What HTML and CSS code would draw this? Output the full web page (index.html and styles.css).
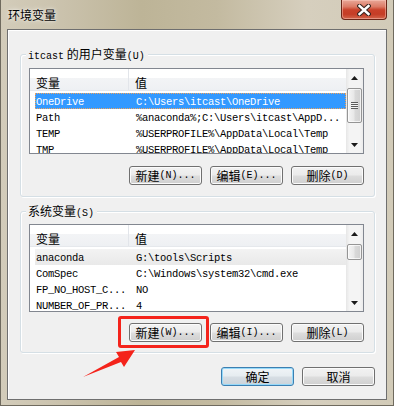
FILE: index.html
```html
<!DOCTYPE html>
<html lang="zh-CN">
<head>
<meta charset="utf-8">
<title>环境变量</title>
<link rel="stylesheet" href="styles.css">
</head>
<body>
<div class="window">
  <div class="titlebar">
    <span class="title">环境变量</span>
    <button class="close" aria-label="关闭">
      <svg width="14" height="12" viewBox="0 0 14 12"><path d="M2.5 2 L11.5 10 M11.5 2 L2.5 10" stroke="#3a2620" stroke-width="4.6" stroke-linecap="square" fill="none"/><path d="M2.5 2 L11.5 10 M11.5 2 L2.5 10" stroke="#ffffff" stroke-width="2.4" stroke-linecap="square" fill="none"/></svg>
    </button>
  </div>
  <div class="client">
    <section class="group group-user">
      <span class="legend"><span class="mono">itcast</span> 的用户变量<span class="mono">(U)</span></span>
      <div class="list list-user">
        <div class="list-main">
          <div class="lv-header"><div class="hcell hname">变量</div><div class="hcell hvalue">值</div></div>
          <div class="lv-body">
            <div class="lv-row selected"><span class="cname">OneDrive</span><span class="cvalue">C:\Users\itcast\OneDrive</span></div>
            <div class="lv-row"><span class="cname">Path</span><span class="cvalue">%anaconda%;C:\Users\itcast\AppD...</span></div>
            <div class="lv-row"><span class="cname">TEMP</span><span class="cvalue">%USERPROFILE%\AppData\Local\Temp</span></div>
            <div class="lv-row"><span class="cname">TMP</span><span class="cvalue">%USERPROFILE%\AppData\Local\Temp</span></div>
          </div>
        </div>
        <div class="scrollbar">
          <div class="sb-btn"><svg width="7" height="4" viewBox="0 0 7 4"><path d="M3.5 0 L7 4 L0 4Z" fill="#1a1a1a"/></svg></div>
          <div class="sb-track"><div class="thumb thumb-user"><div class="grip"></div></div></div>
          <div class="sb-btn"><svg width="7" height="4" viewBox="0 0 7 4"><path d="M0 0 L7 0 L3.5 4Z" fill="#1a1a1a"/></svg></div>
        </div>
      </div>
      <div class="btn-row">
        <button class="btn">新建<span class="mono">(N)...</span></button>
        <button class="btn">编辑<span class="mono">(E)...</span></button>
        <button class="btn">删除<span class="mono">(D)</span></button>
      </div>
    </section>

    <section class="group group-sys">
      <span class="legend">系统变量<span class="mono">(S)</span></span>
      <div class="list list-sys">
        <div class="list-main">
          <div class="lv-header"><div class="hcell hname">变量</div><div class="hcell hvalue">值</div></div>
          <div class="lv-body">
            <div class="lv-row hot"><span class="cname">anaconda</span><span class="cvalue">G:\tools\Scripts</span></div>
            <div class="lv-row"><span class="cname">ComSpec</span><span class="cvalue">C:\Windows\system32\cmd.exe</span></div>
            <div class="lv-row"><span class="cname">FP_NO_HOST_C...</span><span class="cvalue">NO</span></div>
            <div class="lv-row"><span class="cname">NUMBER_OF_PR...</span><span class="cvalue">4</span></div>
          </div>
        </div>
        <div class="scrollbar">
          <div class="sb-btn"><svg width="7" height="4" viewBox="0 0 7 4"><path d="M3.5 0 L7 4 L0 4Z" fill="#1a1a1a"/></svg></div>
          <div class="sb-track"><div class="thumb thumb-sys"></div></div>
          <div class="sb-btn"><svg width="7" height="4" viewBox="0 0 7 4"><path d="M0 0 L7 0 L3.5 4Z" fill="#1a1a1a"/></svg></div>
        </div>
      </div>
      <div class="btn-row">
        <button class="btn">新建<span class="mono">(W)...</span></button>
        <button class="btn">编辑<span class="mono">(I)...</span></button>
        <button class="btn">删除<span class="mono">(L)</span></button>
      </div>
    </section>

    <div class="dialog-buttons">
      <button class="btn default">确定</button>
      <button class="btn">取消</button>
    </div>

    <div class="callout"></div>
    <svg class="pointer" width="60" height="40" viewBox="0 0 60 40"><polygon points="5,33 41,13 38,8 57,6 46,23 43,18" fill="#f4231b"/></svg>
  </div>
</div>
</body>
</html>
```

FILE: styles.css
```css
* { box-sizing: border-box; }

html, body {
  margin: 0;
  padding: 0;
}

body {
  width: 394px;
  height: 406px;
  overflow: hidden;
  font-family: "Noto Sans CJK SC", "Noto Sans", sans-serif;
  font-size: 12px;
  color: #000;
}

.mono {
  font-family: "Liberation Mono", "DejaVu Sans Mono", monospace;
  font-size: 10px;
}

.window {
  width: 394px;
  height: 406px;
  display: flex;
  flex-direction: column;
  padding: 0 6px 5px 6px;
  border: 1px solid #6f6a5e;
  border-top: none;
  background:
    linear-gradient(90deg, #d3ccba 0%, #cbc3ae 14%, #bdb497 36%, #c3baa0 55%, #d6cfbe 78%, #d2cbb8 100%);
}

.titlebar {
  height: 29px;
  flex: none;
  display: flex;
  justify-content: space-between;
  align-items: flex-start;
}

.title {
  margin-left: 1px;
  padding-top: 7px;
  line-height: 16px;
  font-size: 12px;
  color: #000;
  text-shadow: 0 0 5px rgba(255, 255, 255, 0.85), 0 0 2px rgba(255, 255, 255, 0.7);
}

.close {
  width: 46px;
  height: 20px;
  margin: 0;
  padding: 0;
  border: 1px solid #6a2618;
  border-top: none;
  border-radius: 0 0 4px 4px;
  background: linear-gradient(#e9a898 0%, #dc7b66 35%, #c9412a 52%, #c53d26 75%, #d2664c 100%);
  box-shadow: inset 0 0 0 1px rgba(255, 210, 200, 0.45);
  display: flex;
  align-items: center;
  justify-content: center;
}

.client {
  flex: 1;
  position: relative;
  background: #f0f0f0;
  border: 1px solid #6f6f6f;
  box-shadow: inset 1px 1px 0 #ffffff;
  padding: 0 11px 0 12px;
  display: flex;
  flex-direction: column;
}

.group {
  position: relative;
  border: 1px solid #d5dfe5;
  border-radius: 3px;
  box-shadow: inset 1px 1px 0 #ffffff, 1px 1px 0 #ffffff;
  display: flex;
  flex-direction: column;
}

.group-user {
  margin-top: 24px;
  padding: 13px 10px 11px 8px;
}

.group-sys {
  margin-top: 14px;
  padding: 12px 10px 10px 8px;
}

.legend {
  position: absolute;
  top: -8px;
  left: 5px;
  padding: 0 3px 0 2px;
  line-height: 14px;
  background: #f0f0f0;
  white-space: nowrap;
}

.list {
  border: 1px solid #828790;
  background: #ffffff;
  display: flex;
  overflow: hidden;
}

.list-user { height: 86px; }
.list-sys { height: 88px; }

.list-main {
  flex: 1;
  overflow: hidden;
}

.lv-header {
  height: 22px;
  display: flex;
  border-bottom: 1px solid #e5e8ec;
  background: linear-gradient(#ffffff 0%, #ffffff 42%, #f3f4f6 42%, #eef0f3 100%);
}

.hcell {
  padding: 7px 0 0 6px;
  line-height: 14px;
}

.hname {
  width: 99px;
  border-right: 1px solid #e2e5ea;
}

.hvalue {
  flex: 1;
}

.lv-body {
  padding-top: 2px;
}

.lv-row {
  height: 16px;
  margin-left: 5px;
  padding-top: 2px;
  display: flex;
  line-height: 14px;
  font-family: "Liberation Mono", "DejaVu Sans Mono", monospace;
  font-size: 10.5px;
  letter-spacing: -0.3px;
  white-space: nowrap;
}

.cname {
  width: 94px;
  flex: none;
  padding-left: 1px;
}

.cvalue {
  padding-left: 7px;
}

.lv-row.selected {
  background: #3399ff;
  color: #ffffff;
  outline: 1px dotted #f2a35a;
  outline-offset: -1px;
}

.lv-row.hot {
  background: linear-gradient(#f3f3f3, #e9e9e9);
}

.scrollbar {
  width: 17px;
  flex: none;
  display: flex;
  flex-direction: column;
  background: linear-gradient(90deg, #e6e6e6 0%, #f4f4f4 20%, #f4f4f4 80%, #ececec 100%);
}

.sb-btn {
  height: 17px;
  flex: none;
  display: flex;
  align-items: center;
  justify-content: center;
}

.sb-track {
  flex: 1;
  padding-top: 2px;
}

.thumb {
  margin: 0 1px;
  border: 1px solid #959595;
  border-radius: 2px;
  background: linear-gradient(90deg, #f5f5f5 0%, #e8e8e8 45%, #d9d9d9 55%, #d0d0d0 100%);
  box-shadow: inset 0 0 0 1px rgba(255, 255, 255, 0.7);
  display: flex;
  align-items: center;
  justify-content: center;
}

.thumb-user { height: 35px; }
.thumb-sys { height: 16px; }

.grip {
  width: 7px;
  height: 7px;
  background: repeating-linear-gradient(#5c5c5c 0 1px, #f4f4f4 1px 2px);
}

.btn-row {
  margin-top: 12px;
  display: flex;
  justify-content: flex-end;
  gap: 8px;
}

.group-sys .btn-row { margin-top: 11px; }

.btn {
  width: 73px;
  height: 19px;
  margin: 0;
  padding: 0;
  border: 1px solid #707070;
  border-radius: 3px;
  background: linear-gradient(#f2f2f2 0%, #ebebeb 48%, #dddddd 52%, #cfcfcf 100%);
  box-shadow: inset 0 0 0 1px #fbfbfb;
  font-family: "Noto Sans CJK SC", "Noto Sans", sans-serif;
  font-size: 12px;
  line-height: 17px;
  color: #000;
  display: flex;
  align-items: center;
  justify-content: center;
  white-space: nowrap;
}

.btn.default {
  border-color: #3c7fb1;
  box-shadow: inset 0 0 0 1px #96d9f9;
  background: linear-gradient(#f0f4f7 0%, #e6ecf0 48%, #d7dee4 52%, #cbd3da 100%);
}

.dialog-buttons {
  margin-top: 14px;
  display: flex;
  justify-content: flex-end;
  gap: 8px;
}

.callout {
  position: absolute;
  left: 110px;
  top: 286px;
  width: 91px;
  height: 32px;
  border: 3px solid #f4231b;
  border-radius: 3px;
}

.pointer {
  position: absolute;
  left: 70px;
  top: 314px;
}
```
